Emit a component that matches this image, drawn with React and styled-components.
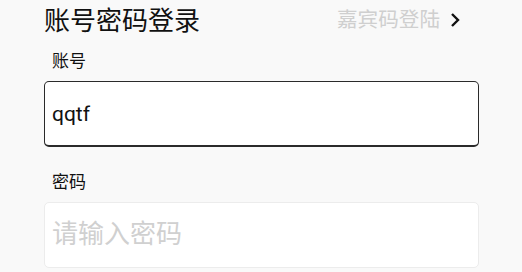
import React from "react";
import styled, { createGlobalStyle } from "styled-components";

const GlobalStyle = createGlobalStyle`
  html, body {
    margin: 0;
    padding: 0;
    background: #f9f9f9;
    font-family: Roboto, "Noto Sans CJK SC", sans-serif;
  }
`;

const Page = styled.div`
  width: 522px;
  height: 272px;
  overflow: hidden;
  padding: 0 43px 0 44px;
  box-sizing: border-box;
`;

const Header = styled.div`
  display: flex;
  justify-content: space-between;
  align-items: center;
  height: 42px;
  padding-right: 19px;
`;

const Title = styled.h1`
  margin: 0;
  font-size: 26px;
  font-weight: 400;
  color: #111;
  line-height: 1;
`;

const GuestLink = styled.div`
  display: flex;
  align-items: center;
  gap: 10px;
  font-size: 20.6px;
  color: #cfcfcf;
  line-height: 1;
  margin-top: -2px;
  cursor: pointer;
`;

const Label = styled.div`
  font-size: 17px;
  color: #111;
  line-height: 1;
  padding-left: 8px;
  margin-top: ${({ mt }) => mt}px;
  margin-bottom: 11px;
`;

const Field = styled.input`
  display: block;
  width: 100%;
  height: 66px;
  box-sizing: border-box;
  border: 1px solid ${({ active }) => (active ? "#2a2a2a" : "#ececec")};
  border-bottom-width: ${({ active }) => (active ? 2 : 1)}px;
  border-radius: 5px;
  background: #fff;
  padding: 0 7px ${({ active }) => (active ? 0 : 3)}px;
  font-family: inherit;
  font-size: ${({ active }) => (active ? 21 : 26)}px;
  color: #111;
  outline: none;

  &::placeholder {
    color: #d0d0d0;
  }
`;

const Chevron = () => (
  <svg width="10" height="16" viewBox="0 0 10 16">
    <path d="M2 2 L8 8 L2 14" fill="none" stroke="#111" strokeWidth="2.4" />
  </svg>
);

export default function App() {
  return (
    <Page>
      <GlobalStyle />
      <Header>
        <Title>账号密码登录</Title>
        <GuestLink>
          嘉宾码登陆
          <Chevron />
        </GuestLink>
      </Header>
      <Label mt={11}>账号</Label>
      <Field active defaultValue="qqtf" />
      <Label mt={27}>密码</Label>
      <Field type="password" placeholder="请输入密码" />
    </Page>
  );
}
